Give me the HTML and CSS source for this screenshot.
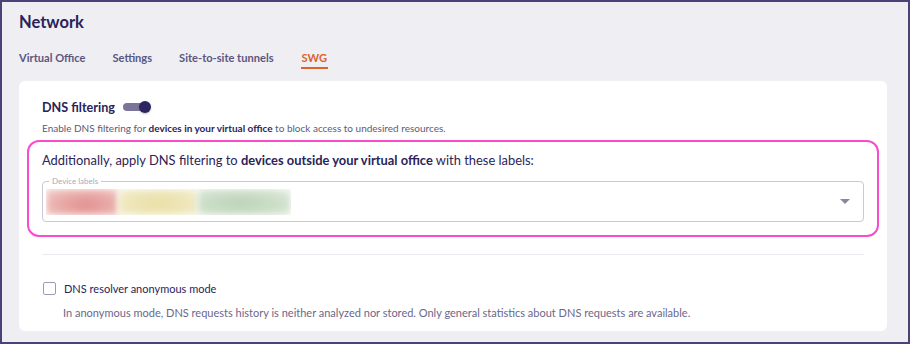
FILE: index.html
```html
<!DOCTYPE html>
<html>
<head>
<meta charset="utf-8">
<link rel="stylesheet" href="styles.css">
</head>
<body>
<div class="frame">
  <h1 class="title">Network</h1>
  <nav class="tabs">
    <span class="tab">Virtual Office</span>
    <span class="tab">Settings</span>
    <span class="tab">Site-to-site tunnels</span>
    <span class="tab active">SWG</span>
  </nav>
  <section class="card">
    <div class="head">
      <span class="head-label">DNS filtering</span>
      <span class="toggle"><span class="knob"></span></span>
    </div>
    <p class="desc">Enable DNS filtering for <b>devices in your virtual office</b> to block access to undesired resources.</p>
    <div class="highlight">
      <p class="lead">Additionally, apply DNS filtering to <b>devices outside your virtual office</b> with these labels:</p>
      <div class="field">
        <span class="legend">Device labels</span>
        <div class="chips">
          <span class="chip red"></span>
          <span class="chip yellow"></span>
          <span class="chip green"></span>
        </div>
        <svg class="caret" width="10" height="6" viewBox="0 0 10 6"><path d="M0 0h10L5 5z" fill="#8a87a3"/></svg>
      </div>
    </div>
    <hr class="divider">
    <label class="check-row">
      <span class="box"></span>
      <span class="check-label">DNS resolver anonymous mode</span>
    </label>
    <p class="note">In anonymous mode, DNS requests history is neither analyzed nor stored. Only general statistics about DNS requests are available.</p>
  </section>
</div>
</body>
</html>
```
FILE: styles.css
```css
html, body { margin: 0; padding: 0; }
body {
  font-family: "Lato", "Noto Sans", sans-serif;
  background: #efeef3;
  color: #2a2458;
}
.frame {
  box-sizing: border-box;
  width: 910px;
  height: 344px;
  border: 2px solid #4b4278;
  padding: 0 21px 0 17px;
  display: flex;
  flex-direction: column;
}
.title {
  margin: 9px 0 0 0;
  font-size: 16.5px;
  font-weight: 700;
  line-height: 22px;
  color: #28235a;
}
.tabs {
  display: flex;
  gap: 27px;
  margin-top: 17px;
  height: 26px;
}
.tab {
  font-size: 11.1px;
  font-weight: 700;
  color: #5b5780;
  line-height: 16px;
}
.tab.active {
  color: #d9652c;
  border-bottom: 2px solid #d9652c;
  height: 19px;
  box-sizing: border-box;
  padding: 0 1px;
}
.card {
  background: #fff;
  border-radius: 6px;
  margin-top: 5px;
  height: 250px;
  box-sizing: border-box;
  padding: 16px 23px 0 23px;
  position: relative;
}
.head {
  display: flex;
  align-items: center;
  gap: 8px;
  height: 20px;
}
.head-label {
  font-size: 12.6px;
  font-weight: 700;
  color: #28235a;
}
.toggle {
  position: relative;
  width: 26px;
  height: 8px;
  border-radius: 4px;
  background: #7b7699;
}
.knob {
  position: absolute;
  right: -2px;
  top: -2px;
  width: 12px;
  height: 12px;
  border-radius: 50%;
  background: #2b2560;
  box-shadow: 0 1px 2px rgba(0,0,0,0.25);
}
.desc {
  margin: 4px 0 0 0;
  font-size: 10px;
  line-height: 14px;
  color: #5d5979;
}
.desc b { color: #2a2458; font-weight: 700; }
.highlight {
  margin: 5px -15px 0 -15px;
  border: 2px solid #f84ccc;
  border-radius: 12px;
  height: 97px;
  box-sizing: border-box;
  padding: 9px 13px 0 13px;
}
.lead {
  margin: 0;
  font-size: 12.9px;
  line-height: 18px;
  color: #2a2458;
}
.lead b { font-weight: 700; }
.field {
  position: relative;
  margin-top: 12px;
  height: 41px;
  box-sizing: border-box;
  border: 1px solid #c9c7d8;
  border-radius: 4px;
  display: flex;
  align-items: center;
  padding: 0 3px;
}
.legend {
  position: absolute;
  top: -6px;
  left: 6px;
  background: #fff;
  padding: 0 3px;
  font-size: 8px;
  line-height: 10px;
  color: #aaa7bd;
}
.chips {
  display: flex;
  height: 26px;
  margin-top: 1px;
  width: 245px;
  overflow: hidden;
}
.chip {
  height: 26px;
  filter: blur(3px);
}
.chip.red { width: 72px; background: radial-gradient(ellipse at 55% 60%, #e2908f 0%, #eab0ad 55%, #f3d3cf 100%); }
.chip.yellow { width: 80px; background: radial-gradient(ellipse at 50% 55%, #e9dfa5 0%, #efe7bd 60%, #f6f1dd 100%); }
.chip.green { width: 93px; background: radial-gradient(ellipse at 45% 55%, #bcd3b8 0%, #cfe0cb 60%, #eaf1e8 100%); }
.caret {
  position: absolute;
  right: 13px;
  top: 17px;
}
.divider {
  border: 0;
  border-top: 1px solid #ebeaf0;
  margin: 17px 0 0 0;
}
.check-row {
  display: flex;
  align-items: center;
  gap: 8px;
  margin-top: 26px;
  height: 14px;
}
.box {
  width: 11px;
  height: 11px;
  border: 1px solid #9d9ab5;
  border-radius: 2px;
  margin-left: 1px;
}
.check-label {
  font-size: 11px;
  color: #2a2458;
}
.note {
  margin: 10px 0 0 21px;
  font-size: 11px;
  line-height: 16px;
  color: #6b6789;
}
```
